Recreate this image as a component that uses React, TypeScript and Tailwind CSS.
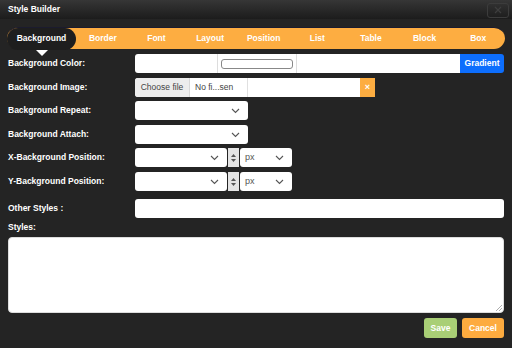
import React from 'react';

const tabs = ['Border', 'Font', 'Layout', 'Position', 'List', 'Table', 'Block', 'Box'];

const Chevron = () => (
  <svg width="9" height="6" viewBox="0 0 9 6" className="shrink-0">
    <path d="M1 1l3.5 3.5L8 1" fill="none" stroke="#555" strokeWidth="1.1" />
  </svg>
);

const Select = ({ width, text = '' }: { width: string; text?: string }) => (
  <div className={`${width} h-[19px] bg-white rounded-[3px] flex items-center justify-between pl-[5px] pr-[8px]`}>
    <span className="text-[9px] text-[#555]">{text}</span>
    <Chevron />
  </div>
);

const Label = ({ children }: { children: React.ReactNode }) => (
  <div className="w-[127px] shrink-0 text-[8.5px] font-bold text-white">{children}</div>
);

const Spinner = () => (
  <div className="w-[11px] h-[19px] bg-[#e4e4e4] flex flex-col items-center justify-center gap-[2px] mx-[1px]">
    <svg width="5" height="3" viewBox="0 0 5 3"><path d="M0 3L2.5 0 5 3z" fill="#555" /></svg>
    <svg width="5" height="3" viewBox="0 0 5 3"><path d="M0 0L2.5 3 5 0z" fill="#555" /></svg>
  </div>
);

export default function App() {
  return (
    <div className="w-[512px] h-[348px] bg-[#242424] overflow-hidden font-['Liberation_Sans',Arial,sans-serif]">
      {/* title bar */}
      <div className="h-[19px] flex items-center justify-between pl-[8px] pr-[3px] bg-gradient-to-b from-[#363636] to-[#1c1c1c]">
        <span className="text-[8.5px] font-bold text-white">Style Builder</span>
        <div className="w-[22px] h-[15px] mt-[1px] rounded-[3px] border border-[#3c3c3c] flex items-center justify-center">
          <svg width="8" height="8" viewBox="0 0 8 8">
            <path d="M1 1l6 6M7 1L1 7" stroke="#3e3e3e" strokeWidth="1.2" />
          </svg>
        </div>
      </div>

      {/* tabs */}
      <div className="mt-[8px] mx-[7px] h-[22px] bg-[#fdad41] rounded-full flex items-center border-t border-[#1b1b2e]">
        <div className="relative w-[69px] h-[22px] bg-[#1e1e1e] rounded-full flex items-center justify-center text-[8.5px] font-bold text-white">
          Background
          <div className="absolute left-[29px] top-[22px] w-0 h-0 border-l-[6px] border-r-[6px] border-t-[6px] border-l-transparent border-r-transparent border-t-white" />
        </div>
        {tabs.map((t) => (
          <div key={t} className="flex-1 text-center text-[8.5px] font-bold text-white">{t}</div>
        ))}
      </div>

      <div className="px-[8px] mt-[5px] flex flex-col">
        {/* background color */}
        <div className="flex items-center h-[19px]">
          <Label>Background Color:</Label>
          <div className="flex-1 h-[19px] flex">
            <div className="flex-1 bg-white rounded-l-[3px] flex items-center">
              <div className="w-[83px] h-full border-r border-[#ddd]" />
              <div className="w-[72px] h-[10px] ml-[3px] border border-[#888] rounded-[3px]" />
              <div className="w-[4px] h-full border-r border-[#ddd]" />
            </div>
            <div className="w-[44px] bg-[#0d6efd] rounded-r-[3px] flex items-center justify-center text-[8.5px] font-bold text-white">
              Gradient
            </div>
          </div>
        </div>

        {/* background image */}
        <div className="flex items-center h-[19px] mt-[5px]">
          <Label>Background Image:</Label>
          <div className="w-[225px] h-[19px] bg-white rounded-l-[3px] flex items-center overflow-hidden">
            <div className="w-[55px] h-full bg-[#ededed] border-r border-[#d8d8d8] flex items-center justify-center text-[8.5px] text-[#444]">
              Choose file
            </div>
            <div className="w-[58px] h-full border-r border-[#e0e0e0] flex items-center pl-[5px] text-[8.5px] text-[#444]">
              No fi...sen
            </div>
          </div>
          <div className="w-[15px] h-[19px] bg-[#fdad41] flex items-center justify-center text-[9px] font-bold text-white">×</div>
        </div>

        {/* repeat */}
        <div className="flex items-center h-[19px] mt-[4px]">
          <Label>Background Repeat:</Label>
          <Select width="w-[113px]" />
        </div>

        {/* attach */}
        <div className="flex items-center h-[19px] mt-[5px]">
          <Label>Background Attach:</Label>
          <Select width="w-[113px]" />
        </div>

        {/* x position */}
        <div className="flex items-center h-[19px] mt-[4px]">
          <Label>X-Background Position:</Label>
          <Select width="w-[92px]" />
          <Spinner />
          <Select width="w-[52px]" text="px" />
        </div>

        {/* y position */}
        <div className="flex items-center h-[19px] mt-[5px]">
          <Label>Y-Background Position:</Label>
          <Select width="w-[92px]" />
          <Spinner />
          <Select width="w-[52px]" text="px" />
        </div>

        {/* other styles */}
        <div className="flex items-center h-[19px] mt-[8px]">
          <Label>Other Styles :</Label>
          <div className="flex-1 h-[19px] bg-white rounded-[3px]" />
        </div>

        <div className="mt-[2px] h-[14px] flex items-center">
          <Label>Styles:</Label>
        </div>

        <div className="relative mt-[3px] h-[76px] bg-white rounded-[4px] border border-[#ddd]">
          <svg width="6" height="6" viewBox="0 0 6 6" className="absolute right-[1px] bottom-[1px]">
            <path d="M6 0L0 6M6 3L3 6" stroke="#999" strokeWidth="0.8" />
          </svg>
        </div>

        <div className="flex justify-end gap-[5px] mt-[5px]">
          <div className="w-[33px] h-[20px] bg-[#a9cf76] rounded-[3px] flex items-center justify-center text-[8.5px] font-bold text-white">
            Save
          </div>
          <div className="w-[42px] h-[20px] bg-[#fdab3f] rounded-[3px] flex items-center justify-center text-[8.5px] font-bold text-white">
            Cancel
          </div>
        </div>
      </div>
    </div>
  );
}
